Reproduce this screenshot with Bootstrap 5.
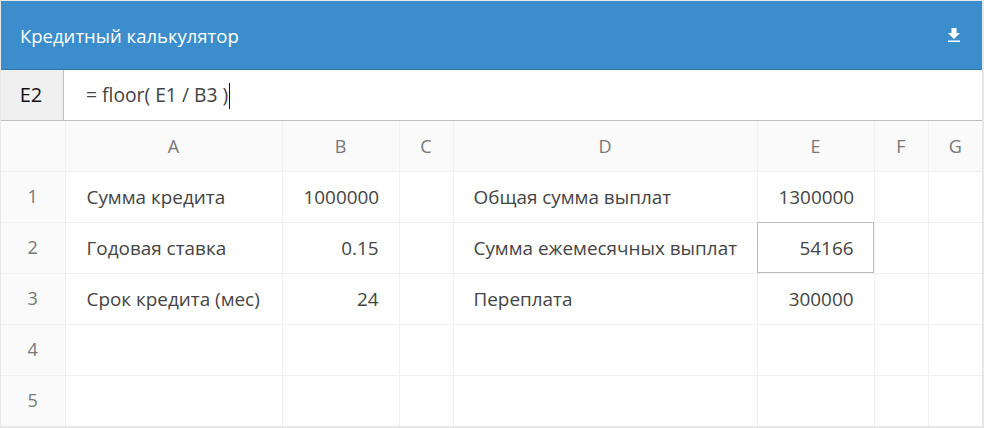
<!DOCTYPE html>
<html lang="ru">
<head>
  <meta charset="UTF-8" />
  <title>Кредитный калькулятор</title>
  <link href="https://cdn.jsdelivr.net/npm/bootstrap@5.3.0/dist/css/bootstrap.min.css" rel="stylesheet" />
  <style>
    html, body { height: 428px; overflow: hidden; background: #fff; }
    body { font-family: "Open Sans", "Noto Sans", sans-serif; font-size: 18.9px; color: #444; }
    .calc-frame { width: 984px; height: 428px; border: 1px solid #e8e8e8; border-right-width: 2px; border-bottom-width: 2px; }
    .calc-head { height: 69px; background: #3c8dcb; border-bottom: 1px solid #2f75ab; color: #fff; padding: 2px 21px 0 19px; font-size: 18.5px; }
    .calc-head svg { margin-bottom: 2px; }
    .calc-bar { height: 51px; border-bottom: 1px solid #bdbdbd; }
    .cell-name { width: 63px; background: #f0f0f0; border-right: 1px solid #bdbdbd; color: #111; font-weight: 500; font-size: 20px; padding: 0 2px 1px 0; }
    .cell-formula { padding-left: 22px; color: #444; padding-top: 1px; font-size: 19.3px; }
    .caret-bar { width: 1px; height: 26px; background: #111; margin-left: 1px; }
    .sheet { table-layout: fixed; width: 981px; border-collapse: collapse; margin: 0; }
    .sheet th, .sheet td { height: 51px; padding: 2px 20px 0 21px; border: 1px solid #f0f0f0; font-weight: 400; color: #444; vertical-align: middle; white-space: nowrap; }
    .sheet tr:first-child th { height: 50px; border-top: 0; padding-top: 2px; }
    .sheet th:first-child { border-left: 0; }
    .sheet tr > :last-child { border-right: 0; }
    .sheet tr:last-child td, .sheet tr:last-child th { border-bottom: 0; }
    .sheet .head-cell { background: #fafafa; color: #777; text-align: center; padding: 0; font-size: 18px; }
    .sheet tr:first-child .head-cell { padding-top: 2px; }
    .sheet td.cell-active { outline: 1px solid #bdbdbd; outline-offset: -1px; }
    .sheet td.col-label-d { padding-left: 20px; }
  </style>
</head>
<body>
  <div class="calc-frame d-flex flex-column">

    <div class="calc-head flex-shrink-0 d-flex align-items-center justify-content-between">
      <span>Кредитный калькулятор</span>
      <svg width="14" height="16" viewBox="0 0 14 16" fill="#fff" aria-hidden="true">
        <path d="M4.5 1h5v5h3.5l-6 6-6-6h3.5z" />
        <rect x="1" y="13.5" width="12" height="1.5" />
      </svg>
    </div>

    <div class="calc-bar flex-shrink-0 d-flex">
      <div class="cell-name d-flex align-items-center justify-content-center">E2</div>
      <div class="cell-formula d-flex align-items-center">= floor( E1 / B3 )<span class="caret-bar"></span></div>
    </div>

    <table class="sheet flex-shrink-0">
      <colgroup>
        <col style="width:64px" /><col style="width:217px" /><col style="width:117px" /><col style="width:54px" />
        <col style="width:304px" /><col style="width:117px" /><col style="width:54px" /><col style="width:54px" />
      </colgroup>
      <tbody>
        <tr>
          <th class="head-cell"></th><th class="head-cell">A</th><th class="head-cell">B</th><th class="head-cell">C</th>
          <th class="head-cell">D</th><th class="head-cell">E</th><th class="head-cell">F</th><th class="head-cell">G</th>
        </tr>
        <tr>
          <th class="head-cell">1</th><td>Сумма кредита</td><td class="text-end">1000000</td><td></td>
          <td class="col-label-d">Общая сумма выплат</td><td class="text-end">1300000</td><td></td><td></td>
        </tr>
        <tr>
          <th class="head-cell">2</th><td>Годовая ставка</td><td class="text-end">0.15</td><td></td>
          <td class="col-label-d">Сумма ежемесячных выплат</td><td class="text-end cell-active">54166</td><td></td><td></td>
        </tr>
        <tr>
          <th class="head-cell">3</th><td>Срок кредита (мес)</td><td class="text-end">24</td><td></td>
          <td class="col-label-d">Переплата</td><td class="text-end">300000</td><td></td><td></td>
        </tr>
        <tr>
          <th class="head-cell">4</th><td></td><td></td><td></td><td></td><td></td><td></td><td></td>
        </tr>
        <tr>
          <th class="head-cell">5</th><td></td><td></td><td></td><td></td><td></td><td></td><td></td>
        </tr>
      </tbody>
    </table>
  </div>
  <script src="https://cdn.jsdelivr.net/npm/bootstrap@5.3.0/dist/js/bootstrap.bundle.min.js"></script>
</body>
</html>
